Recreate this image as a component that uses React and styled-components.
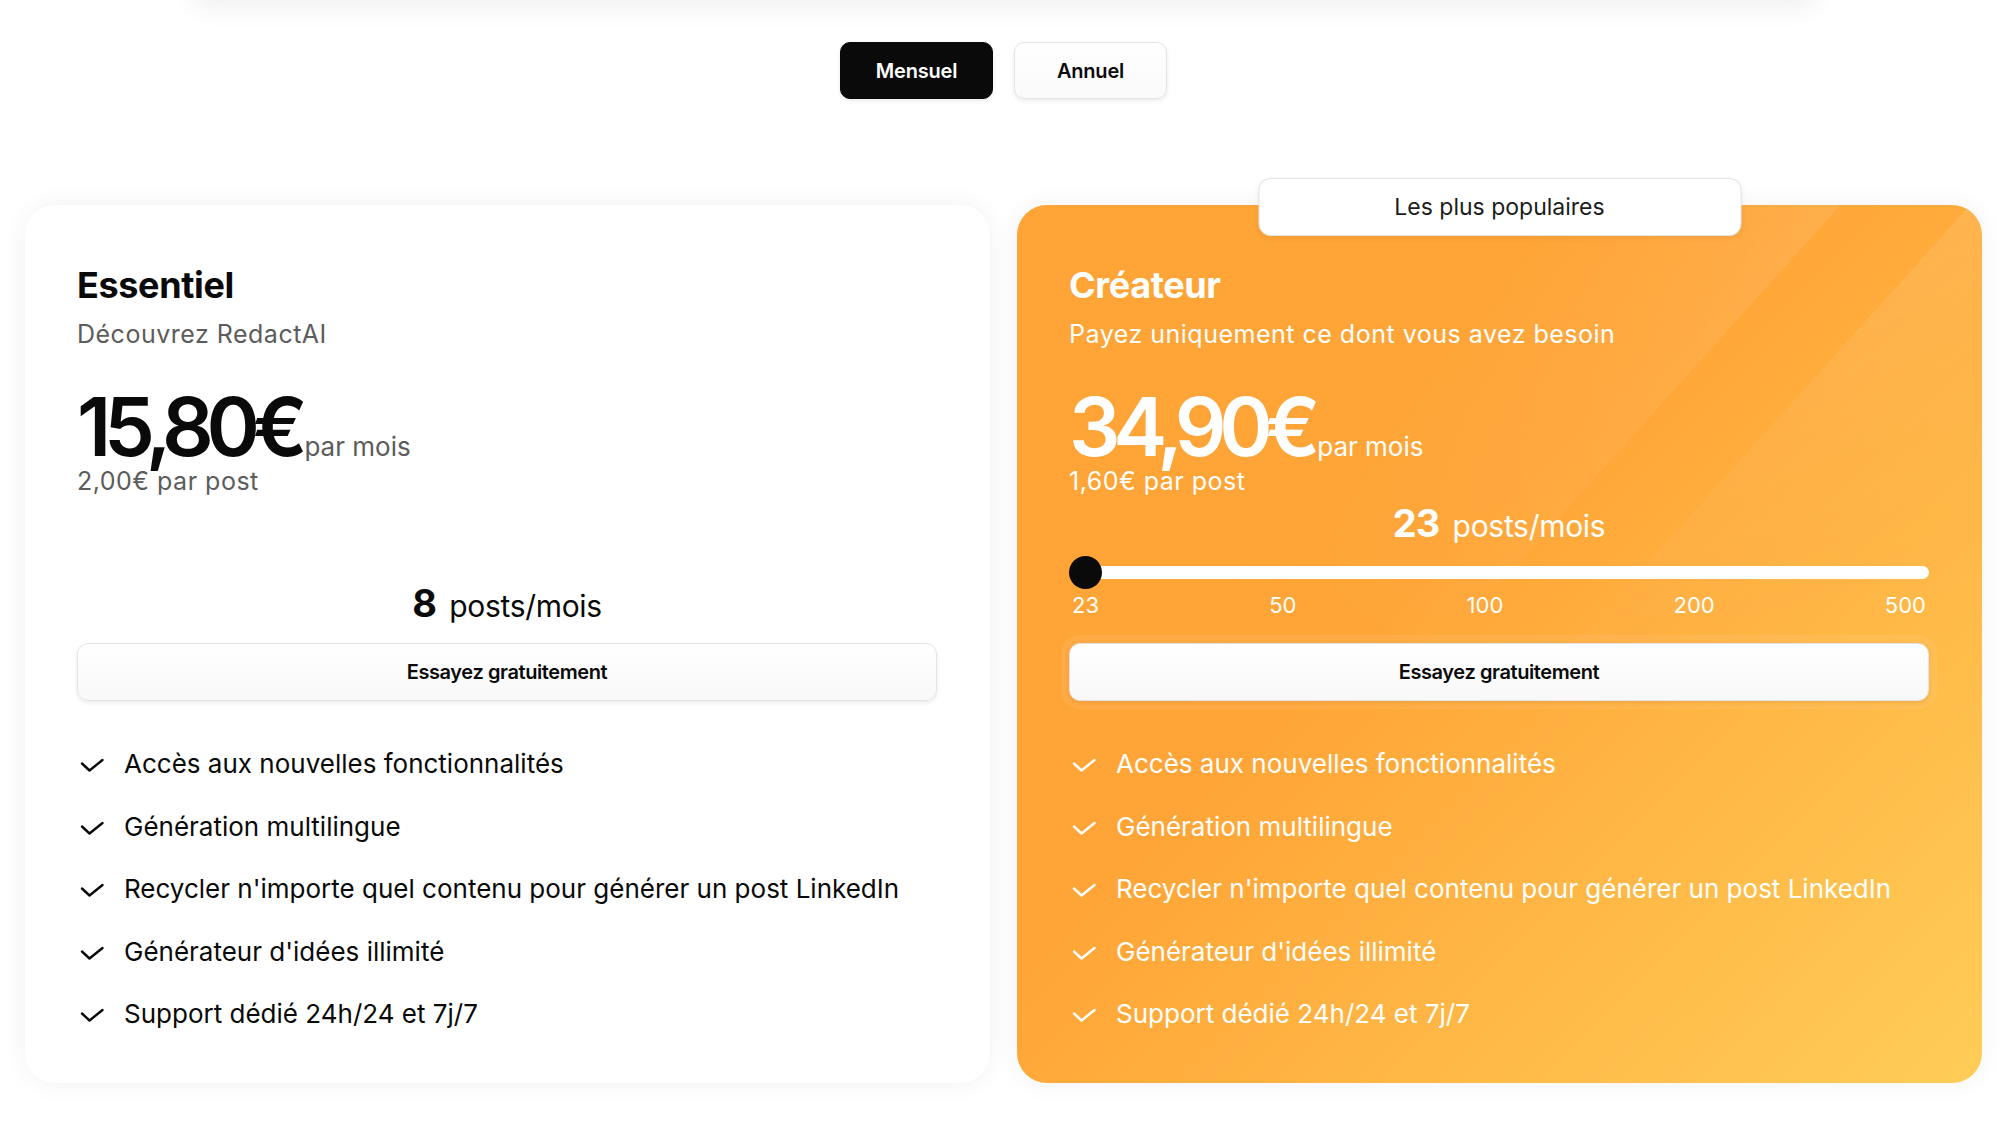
import React from 'react';
import styled, { createGlobalStyle } from 'styled-components';

const GlobalStyle = createGlobalStyle`
  html, body {
    margin: 0;
    padding: 0;
    background: #ffffff;
  }
  body {
    font-family: Inter, "Noto Sans", sans-serif;
    color: #0a0a0a;
    -webkit-font-smoothing: antialiased;
  }
  * {
    box-sizing: border-box;
  }
`;

const Page = styled.div`
  padding: 0 18px 0 25px;
`;

const TopBar = styled.div`
  width: 1634px;
  height: 80px;
  margin: -80px auto 0;
  border-radius: 24px;
  background: #ffffff;
  box-shadow: 0 6px 28px rgba(0, 0, 0, 0.07);
`;

const Toggle = styled.div`
  display: flex;
  justify-content: center;
  gap: 21px;
  padding-top: 42px;
`;

const ToggleButton = styled.button`
  width: 153px;
  height: 57px;
  border-radius: 10px;
  font-family: inherit;
  font-size: 20px;
  font-weight: 600;
  letter-spacing: -0.01em;
  cursor: pointer;
  border: 1px solid ${p => (p.$active ? '#0a0a0a' : '#e4e4e7')};
  background: ${p => (p.$active ? '#0a0a0a' : 'linear-gradient(#ffffff, #fafafa)')};
  color: ${p => (p.$active ? '#ffffff' : '#0a0a0a')};
  box-shadow: 0 2px 4px rgba(0, 0, 0, 0.08);
`;

const Cards = styled.div`
  display: grid;
  grid-template-columns: 1fr 1fr;
  gap: 27px;
  margin-top: 106px;
  padding-bottom: 45px;
`;

const Card = styled.div`
  position: relative;
  display: flex;
  flex-direction: column;
  min-height: 878px;
  padding: 58px 53px 51px 52px;
  border-radius: 30px;
  color: ${p => (p.$featured ? '#ffffff' : '#0a0a0a')};
  background: ${p =>
    p.$featured
      ? 'linear-gradient(135deg, #ffa436 0%, #ffa537 42%, #ffcd57 100%)'
      : '#ffffff'};
  box-shadow: 0 0 26px rgba(0, 0, 0, 0.06);

  &::before {
    content: '';
    display: ${p => (p.$featured ? 'block' : 'none')};
    position: absolute;
    inset: 0;
    border-radius: 30px;
    pointer-events: none;
    background: linear-gradient(
      132deg,
      rgba(255, 255, 255, 0) 30%,
      rgba(255, 255, 255, 0.1) 46.9%,
      rgba(255, 255, 255, 0) 46.9%,
      rgba(255, 255, 255, 0) 54.3%,
      rgba(255, 255, 255, 0.1) 54.3%,
      rgba(255, 255, 255, 0.03) 72%
    );
    -webkit-mask-image: linear-gradient(to bottom, #000 0%, rgba(0, 0, 0, 0) 55%);
    mask-image: linear-gradient(to bottom, #000 0%, rgba(0, 0, 0, 0) 55%);
  }

  & > * {
    position: relative;
  }
`;

const Badge = styled.div`
  position: absolute !important;
  top: -27px;
  left: 50%;
  transform: translateX(-50%);
  width: 483px;
  height: 58px;
  display: flex;
  align-items: center;
  justify-content: center;
  background: #ffffff;
  border: 1px solid #e4e4e7;
  border-radius: 12px;
  box-shadow: 0 2px 6px rgba(0, 0, 0, 0.06);
  font-size: 23px;
  color: #1c1c1c;
`;

const Title = styled.h2`
  margin: 0;
  font-size: 36px;
  line-height: 44px;
  font-weight: 650;
  letter-spacing: -0.01em;
`;

const Subtitle = styled.p`
  margin: 11px 0 0;
  font-size: 25px;
  line-height: 32px;
  letter-spacing: 0.02em;
  color: ${p => (p.$light ? '#ffffff' : '#5c5c5c')};
`;

const PriceRow = styled.div`
  display: flex;
  align-items: baseline;
  margin-top: 39px;
`;

const Price = styled.span`
  font-size: 81px;
  line-height: 76px;
  font-weight: 600;
  letter-spacing: -0.09em;
  padding-right: 4px;
`;

const PerMonth = styled.span`
  font-size: 26px;
  line-height: 1;
  color: ${p => (p.$light ? '#ffffff' : '#5c5c5c')};
`;

const PerPost = styled.p`
  margin: 0;
  font-size: 25px;
  line-height: 32px;
  letter-spacing: 0.02em;
  color: ${p => (p.$light ? '#ffffff' : '#5c5c5c')};
`;

const Usage = styled.div`
  height: 146px;
  display: flex;
  flex-direction: column;
  justify-content: flex-end;
  padding-bottom: ${p => (p.$slider ? 23 : 13)}px;
`;

const Posts = styled.div`
  display: flex;
  justify-content: center;
  align-items: baseline;
  gap: 13px;
  line-height: 48px;
`;

const PostsCount = styled.span`
  font-size: 38px;
  font-weight: 700;
  letter-spacing: -0.02em;
`;

const PostsUnit = styled.span`
  font-size: 30px;
  letter-spacing: -0.01em;
`;

const Slider = styled.div`
  position: relative;
  height: 33px;
  margin-top: 6px;
  display: flex;
  align-items: center;
`;

const Track = styled.div`
  flex: 1;
  height: 13px;
  margin-left: 10px;
  border-radius: 7px;
  background: #ffffff;
`;

const Thumb = styled.div`
  position: absolute;
  left: 0;
  top: 0;
  width: 33px;
  height: 33px;
  border-radius: 50%;
  background: #0a0a0a;
`;

const Ticks = styled.div`
  display: flex;
  justify-content: space-between;
  margin-top: 1px;
  padding: 0 3px;
  font-size: 22px;
  line-height: 30px;
`;

const TryButton = styled.button`
  width: 100%;
  height: 58px;
  border-radius: 11px;
  border: 1px solid #e4e4e7;
  background: linear-gradient(#ffffff, #f8f8f8);
  font-family: inherit;
  font-size: 20px;
  font-weight: 600;
  letter-spacing: -0.02em;
  color: #0a0a0a;
  cursor: pointer;
  box-shadow: ${p =>
    p.$glow
      ? '0 2px 5px rgba(180, 90, 0, 0.18), 0 0 0 8px rgba(255, 255, 255, 0.07)'
      : '0 2px 4px rgba(0, 0, 0, 0.08)'};
`;

const Features = styled.ul`
  list-style: none;
  margin: 45px 0 0;
  padding: 0;
  display: flex;
  flex-direction: column;
  gap: 26.5px;
`;

const Feature = styled.li`
  display: flex;
  align-items: center;
  gap: 20px;
  font-size: 26px;
  line-height: 36px;
`;

const CheckIcon = styled.svg`
  flex: none;
  width: 24px;
  height: 14px;
  margin-left: 3px;
  margin-top: 2px;
`;

const Check = () => (
  <CheckIcon viewBox="0 0 24 14" fill="none">
    <polyline
      points="2,5.5 9.5,12.5 22.5,2"
      stroke="currentColor"
      strokeWidth="2.4"
      strokeLinecap="round"
      strokeLinejoin="round"
    />
  </CheckIcon>
);

const features = [
  'Accès aux nouvelles fonctionnalités',
  'Génération multilingue',
  "Recycler n'importe quel contenu pour générer un post LinkedIn",
  "Générateur d'idées illimité",
  'Support dédié 24h/24 et 7j/7',
];

const ticks = ['23', '50', '100', '200', '500'];

export default function App() {
  return (
    <Page>
      <GlobalStyle />
      <TopBar />
      <Toggle>
        <ToggleButton $active>Mensuel</ToggleButton>
        <ToggleButton>Annuel</ToggleButton>
      </Toggle>
      <Cards>
        <Card>
          <Title>Essentiel</Title>
          <Subtitle>Découvrez RedactAI</Subtitle>
          <PriceRow>
            <Price>15,80€</Price>
            <PerMonth>par mois</PerMonth>
          </PriceRow>
          <PerPost>2,00€ par post</PerPost>
          <Usage>
            <Posts>
              <PostsCount>8</PostsCount>
              <PostsUnit>posts/mois</PostsUnit>
            </Posts>
          </Usage>
          <TryButton>Essayez gratuitement</TryButton>
          <Features>
            {features.map(f => (
              <Feature key={f}>
                <Check />
                {f}
              </Feature>
            ))}
          </Features>
        </Card>

        <Card $featured>
          <Badge>Les plus populaires</Badge>
          <Title>Créateur</Title>
          <Subtitle $light>Payez uniquement ce dont vous avez besoin</Subtitle>
          <PriceRow>
            <Price>34,90€</Price>
            <PerMonth $light>par mois</PerMonth>
          </PriceRow>
          <PerPost $light>1,60€ par post</PerPost>
          <Usage $slider>
            <Posts>
              <PostsCount>23</PostsCount>
              <PostsUnit>posts/mois</PostsUnit>
            </Posts>
            <Slider>
              <Track />
              <Thumb />
            </Slider>
            <Ticks>
              {ticks.map(t => (
                <span key={t}>{t}</span>
              ))}
            </Ticks>
          </Usage>
          <TryButton $glow>Essayez gratuitement</TryButton>
          <Features>
            {features.map(f => (
              <Feature key={f}>
                <Check />
                {f}
              </Feature>
            ))}
          </Features>
        </Card>
      </Cards>
    </Page>
  );
}
